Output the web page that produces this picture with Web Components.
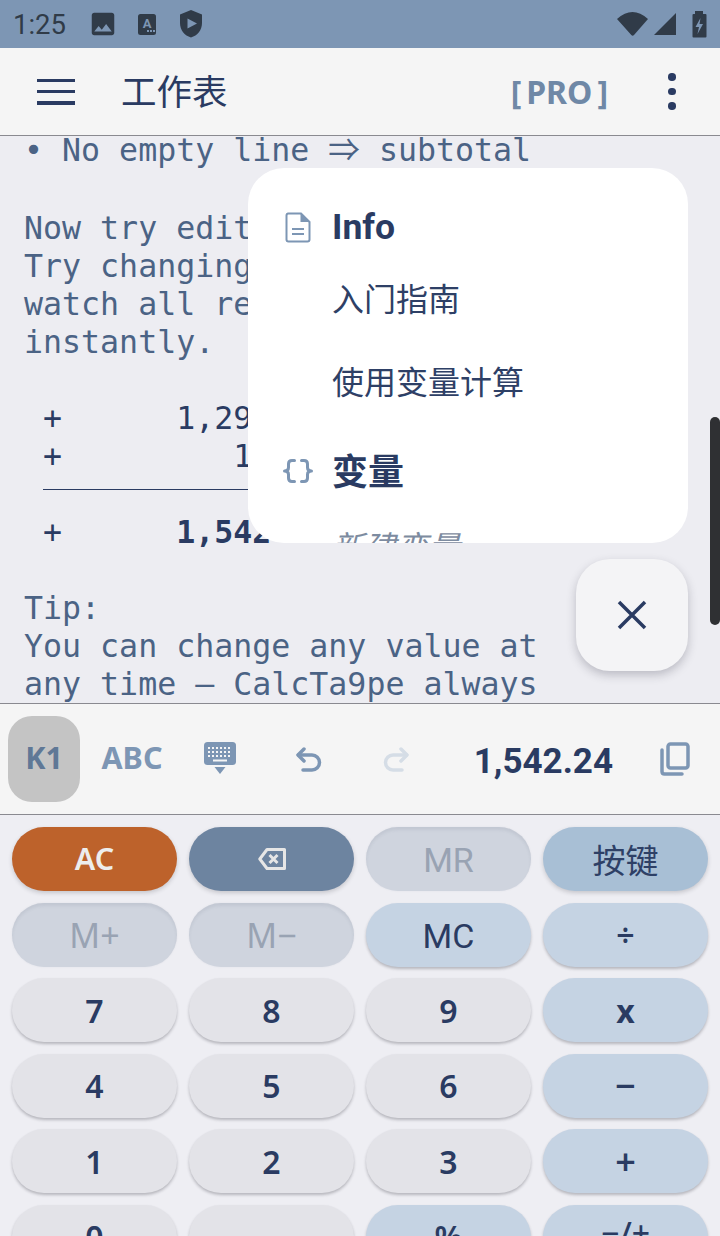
<!DOCTYPE html>
<html lang="zh">
<head>
<meta charset="utf-8">
<title>CalcTa9pe</title>
<style>
  html, body { margin: 0; height: 100%; overflow: hidden; background: #eeeef3; }
  body { display: flex; flex-direction: column; width: 720px; height: 1236px; font-family: "Noto Sans", "Noto Sans CJK SC", sans-serif; }
</style>
</head>
<body>
<status-bar></status-bar>
<app-bar></app-bar>
<doc-sheet>
  <doc-line>• No empty line <span style="font-family:'Noto Sans CJK SC',sans-serif;line-height:0">⇒</span> subtotal</doc-line>
  <doc-line style="height:40px"></doc-line>
  <doc-line>Now try edit</doc-line>
  <doc-line>Try changing</doc-line>
  <doc-line>watch all re</doc-line>
  <doc-line>instantly.</doc-line>
  <doc-line></doc-line>
  <doc-line kind="num"> +      1,29</doc-line>
  <doc-line kind="num"> +         1</doc-line>
  <doc-line kind="rule"></doc-line>
  <doc-line kind="num"> +      <b>1,542</b></doc-line>
  <doc-line></doc-line>
  <doc-line>Tip:</doc-line>
  <doc-line>You can change any value at</doc-line>
  <doc-line>any time — CalcTa9pe always</doc-line>
  <doc-menu slot="over"></doc-menu>
  <close-fab slot="over"></close-fab>
  <scroll-thumb slot="over"></scroll-thumb>
</doc-sheet>
<tool-bar></tool-bar>
<key-pad></key-pad>

<script>
const NAVY = '#2a3b62';
const STEEL = '#7d96b4';

class StatusBar extends HTMLElement {
  connectedCallback() {
    this.attachShadow({ mode: 'open' });
    this.shadowRoot.innerHTML = `
      <style>
        :host { display: flex; align-items: center; flex: none; height: 48px; background: ${STEEL}; color: #303b48; }
        .time { font: 400 27.5px Roboto, sans-serif; margin-left: 13px; width: 75px; }
        svg { display: block; fill: #303b48; flex: none; }
        .fill { flex: 1; }
      </style>
      <span class="time">1:25</span>
      <svg width="30" height="30" viewBox="0 0 24 24"><path d="M21 19V5c0-1.1-.9-2-2-2H5c-1.100 0-2 .9-2 2v14c0 1.100.9 2 2 2h14c1.100 0 2-.9 2-2zM8.500 13.500l2.500 3.010L14.500 12l4.500 6H5l3.500-4.500z"/></svg>
      <svg width="20" height="22" viewBox="0 0 20 22" style="margin-left:19px">
        <rect x="1" y="1" width="18" height="21" rx="2.500"/>
        <text x="10" y="14.500" text-anchor="middle" font-family="Roboto, sans-serif" font-weight="700" font-size="13" fill="${STEEL}">A</text>
        <rect x="10" y="17" width="2" height="2" fill="${STEEL}"/><rect x="13" y="17" width="2" height="2" fill="${STEEL}"/><rect x="16" y="17" width="2" height="2" fill="${STEEL}"/>
      </svg>
      <svg width="24" height="30" viewBox="0 0 24 30" style="margin-left:22px">
        <path d="M12 1 1 5.500V14c0 7 4.500 12.500 11 14.500C18.500 26.500 23 21 23 14V5.500zM8.500 9.500 18 14.500l-9.500 5z" fill-rule="evenodd"/>
      </svg>
      <span class="fill"></span>
      <svg width="33" height="26" viewBox="0 0 33 26" style="margin-right:4px"><path d="M1 8Q16.500-6 32 8L18 24Q16.700 25.500 15.300 24Z"/></svg>
      <svg width="24" height="24" viewBox="0 0 24 24" style="margin-right:14px"><path d="M1 23 23 1V23Z"/></svg>
      <svg width="16" height="28" viewBox="0 0 16 28" style="margin-right:13px">
        <path d="M4 1h8v3h2.500q1 0 1 1v21.500q0 1-1 1h-12q-1 0-1-1V5q0-1 1-1H4z"/>
        <path d="M9.500 8 4.500 17H8l-1.500 7 5.500-10H8.500z" fill="${STEEL}"/>
      </svg>`;
  }
}
customElements.define('status-bar', StatusBar);

class AppBar extends HTMLElement {
  connectedCallback() {
    this.attachShadow({ mode: 'open' });
    this.shadowRoot.innerHTML = `
      <style>
        :host { display: flex; align-items: center; flex: none; height: 87px; background: #f5f5f5; border-bottom: 1px solid #8a8a90; color: ${NAVY}; }
        .menu { margin-left: 37px; width: 38px; height: 26px; display: flex; flex-direction: column; justify-content: space-between; }
        .menu i { display: block; height: 3.600px; background: ${NAVY}; }
        .title { margin-left: 46px; padding-bottom: 4px; font: 400 35.500px "Noto Sans CJK SC", sans-serif; flex: 1; line-height: 1; }
        .pro { font: 700 32px "Noto Sans", sans-serif; color: #6f88a6; display: flex; gap: 5px; margin-right: 60px; }
        .more { width: 8px; margin-right: 44px; display: flex; flex-direction: column; gap: 7px; }
        .more i { display: block; width: 7.500px; height: 7.500px; border-radius: 50%; background: ${NAVY}; }
      </style>
      <div class="menu"><i></i><i></i><i></i></div>
      <div class="title">工作表</div>
      <div class="pro"><span>[</span><span>PRO</span><span>]</span></div>
      <div class="more"><i></i><i></i><i></i></div>`;
  }
}
customElements.define('app-bar', AppBar);

class DocSheet extends HTMLElement {
  connectedCallback() {
    this.attachShadow({ mode: 'open' });
    this.shadowRoot.innerHTML = `
      <style>
        :host { display: block; position: relative; flex: none; height: 567px; overflow: hidden; background: #edEDf2; }
        .lines { margin-top: -5px; padding-left: 24px; }
      </style>
      <div class="lines"><slot></slot></div>
      <slot name="over"></slot>`;
  }
}
customElements.define('doc-sheet', DocSheet);

class DocLine extends HTMLElement {
  connectedCallback() {
    this.attachShadow({ mode: 'open' });
    this.shadowRoot.innerHTML = `
      <style>
        :host { display: block; height: 38px; font: 400 31.600px/38px "DejaVu Sans Mono", monospace; color: #4b6385; }
        :host([kind="num"]) { color: ${NAVY}; }
        :host([kind="rule"]) { box-sizing: border-box; padding-top: 14px; }
        .text { white-space: pre; height: 38px; }
        .rule { height: 1px; background: ${NAVY}; margin-left: 19px; width: 300px; }
      </style>
      ${this.getAttribute('kind') === 'rule' ? '<div class="rule"></div>' : '<div class="text"><slot></slot></div>'}`;
  }
}
customElements.define('doc-line', DocLine);

class DocMenu extends HTMLElement {
  connectedCallback() {
    this.attachShadow({ mode: 'open' });
    this.shadowRoot.innerHTML = `
      <style>
        :host { display: block; position: absolute; left: 248px; top: 32px; width: 440px; height: 375px; background: #fff; border-radius: 36px; overflow: hidden; color: #2e4066; font-family: "Noto Sans CJK SC", sans-serif; }
        .list { padding-top: 33px; }
        .head { display: flex; align-items: center; height: 52px; font-weight: 700; font-size: 36px; color: ${NAVY}; }
        .head span.en { font-family: Roboto, sans-serif; font-size: 35.500px; }
        .ico { width: 85px; display: flex; justify-content: center; padding-left: 15px; box-sizing: border-box; margin-right: -1px; }
        .item { padding-left: 84px; font-size: 32px; height: 82px; line-height: 82px; }
        .item.first { margin-top: 3px; margin-bottom: 1px; }
        .item.new { font-style: italic; color: #7d8ba0; height: 60px; line-height: 60px; margin-top: 20px; }
        .vars { margin-top: 22px; }
        .vars .ico { padding-top: 4px; }
      </style>
      <div class="list">
        <div class="head">
          <div class="ico"><svg width="26" height="31" viewBox="0 0 26 31" fill="none">
            <path d="M2.500 1.500H16L24.500 10V27.500q0 2-2 2H3.500q-2 0-2-2V3.500q0-2 2-2z" stroke="${STEEL}" stroke-width="2"/>
            <path d="M15.500 1.500V10H24.500z" fill="${STEEL}"/>
            <path d="M7 17h12M7 22h12" stroke="${STEEL}" stroke-width="2"/>
          </svg></div>
          <span class="en">Info</span>
        </div>
        <div class="item first">入门指南</div>
        <div class="item">使用变量计算</div>
        <div class="head vars">
          <div class="ico"><svg width="30" height="24" viewBox="0 0 30 24" fill="none" stroke="${STEEL}" stroke-width="3" stroke-linecap="round" stroke-linejoin="round">
            <path d="M11.500 1.500H9Q5.500 1.500 5.500 5V8.500Q5.500 12 1.500 12 5.500 12 5.500 15.500V19Q5.500 22.500 9 22.500H11.500"/>
            <path d="M18.500 1.500H21Q24.500 1.500 24.500 5V8.500Q24.500 12 28.500 12 24.500 12 24.500 15.500V19Q24.500 22.500 21 22.500H18.500"/>
          </svg></div>
          <span>变量</span>
        </div>
        <div class="item new">新建变量</div>
      </div>`;
  }
}
customElements.define('doc-menu', DocMenu);

class CloseFab extends HTMLElement {
  connectedCallback() {
    this.attachShadow({ mode: 'open' });
    this.shadowRoot.innerHTML = `
      <style>
        :host { display: flex; align-items: center; justify-content: center; position: absolute; left: 576px; top: 423px; width: 112px; height: 112px; border-radius: 34px; background: #f4f4f6; box-shadow: 0 4px 10px rgba(40, 40, 60, .25); }
      </style>
      <svg width="30" height="30" viewBox="0 0 30 30" fill="none" stroke="${NAVY}" stroke-width="3.500"><path d="M2 2 28 28M28 2 2 28"/></svg>`;
  }
}
customElements.define('close-fab', CloseFab);

class ScrollThumb extends HTMLElement {
  connectedCallback() {
    this.attachShadow({ mode: 'open' });
    this.shadowRoot.innerHTML = `
      <style>
        :host { display: block; position: absolute; left: 710px; top: 281px; width: 10px; height: 208px; border-radius: 5px; background: #2f3033; }
      </style>`;
  }
}
customElements.define('scroll-thumb', ScrollThumb);

class ToolBar extends HTMLElement {
  connectedCallback() {
    this.attachShadow({ mode: 'open' });
    this.shadowRoot.innerHTML = `
      <style>
        :host { display: flex; align-items: center; flex: none; height: 110px; background: #f5f5f5; border-top: 1px solid #8a8a90; border-bottom: 1px solid #8a8a90; font-family: "Noto Sans", sans-serif; font-weight: 600; color: ${STEEL}; }
        .cell { width: 88px; flex: none; display: flex; align-items: center; justify-content: center; font-size: 31px; line-height: 1; }
        .cell.txt { padding-bottom: 3px; box-sizing: border-box; font-weight: 700; font-size: 30.500px; }
        .k1 { width: 72px; height: 86px; margin: 0 8px; border-radius: 24px; background: #c4c4c4; color: #5f7896; }
        .value { flex: 1; text-align: right; font: 700 35px Roboto, sans-serif; color: ${NAVY}; padding-right: 17px; padding-top: 5px; }
        svg { display: block; }
      </style>
      <div class="cell txt k1">K1</div>
      <div class="cell txt">ABC</div>
      <div class="cell"><svg width="32" height="32" viewBox="0 0 32 32" style="margin-bottom:2px">
        <rect width="32" height="23" rx="3.500" fill="${STEEL}"/>
        <path d="M4 5h2v2H4zM8 5h2v2H8zM12 5h2v2h-2zM16 5h2v2h-2zM20 5h2v2h-2zM24 5h2v2h-2zM4 9h2v2H4zM8 9h2v2H8zM12 9h2v2h-2zM16 9h2v2h-2zM20 9h2v2h-2zM24 9h2v2h-2zM4 13h2v2H4zM8 13h2v2H8zM12 13h2v2h-2zM16 13h2v2h-2zM20 13h2v2h-2zM24 13h2v2h-2zM9 17.500h14v2H9z" fill="#f5f5f5"/>
        <path d="M10.500 25h11L16 32z" fill="${STEEL}"/>
      </svg></div>
      <div class="cell"><svg width="26" height="25" viewBox="0 0 26 25" fill="none" stroke="${STEEL}" stroke-width="3.500" stroke-linecap="round" stroke-linejoin="round" style="margin-left:2px">
        <path d="M8 2 2 8l6 6"/><path d="M2.500 8H16a7.500 7.500 0 0 1 0 15H7"/>
      </svg></div>
      <div class="cell"><svg width="26" height="25" viewBox="0 0 26 25" fill="none" stroke="#d5dde6" stroke-width="3.500" stroke-linecap="round" stroke-linejoin="round">
        <path d="M18 2l6 6-6 6"/><path d="M23.500 8H10a7.500 7.500 0 0 0 0 15h9"/>
      </svg></div>
      <div class="value">1,542.24</div>
      <div class="cell" style="width:90px"><svg width="30" height="34" viewBox="0 0 30 34" fill="none" stroke="${STEEL}" stroke-width="3.500" stroke-linejoin="round" stroke-linecap="round">
        <rect x="8" y="2" width="20" height="24" rx="2.500"/><path d="M2 8V29.500q0 2.500 2.500 2.500H22"/>
      </svg></div>`;
  }
}
customElements.define('tool-bar', ToolBar);

class CalcKey extends HTMLElement {
  connectedCallback() {
    this.attachShadow({ mode: 'open' });
    this.shadowRoot.innerHTML = `
      <style>
        :host { display: flex; align-items: center; justify-content: center; box-sizing: border-box; height: 64px; border-radius: 32px; background: #e3e3e8; color: ${NAVY}; font: 600 32px "Noto Sans", "Noto Sans CJK SC", sans-serif; box-shadow: 0 2px 3px rgba(40, 40, 50, .28); }
        :host([tone="op"]) { background: #c5d3e3; }
        :host([tone="ac"]) { background: #bd622b; color: #ededed; font-size: 30.500px; padding-bottom: 3px; box-shadow: 0 2px 4px rgba(40, 40, 50, .2); }
        :host([tone="del"]) { background: #6d84a0; box-shadow: 0 2px 4px rgba(40, 40, 50, .2); }
        :host([tone="mode"]) { background: #a8bfd5; font-size: 33px; font-weight: 400; color: #2e4066; box-shadow: 0 2px 4px rgba(40, 40, 50, .2); }
        :host([tone="off"]) { background: #cfd4de; color: #99a3b3; font-weight: 400; box-shadow: inset 0 3px 3px rgba(90, 100, 120, .1), 0 0 2px rgba(90, 100, 120, .1); }
        :host([rb]) { font-family: Roboto, sans-serif; font-size: 34px; font-weight: 400; padding-top: 2px; }
      </style>
      <slot></slot>`;
  }
}
customElements.define('calc-key', CalcKey);

class KeyPad extends HTMLElement {
  connectedCallback() {
    this.attachShadow({ mode: 'open' });
    this.shadowRoot.innerHTML = `
      <style>
        :host { display: grid; grid-template-columns: repeat(4, 165px); grid-auto-rows: 64px; column-gap: 12px; row-gap: 11.500px; padding: 12px 12px 0; flex: 1; overflow: hidden; background: #eeeef3; }
      </style>
      <calc-key tone="ac">AC</calc-key>
      <calc-key tone="del"><svg width="28" height="22" viewBox="0 0 28 22" fill="none" stroke="#e6e6e6" stroke-width="3" stroke-linejoin="round"><path d="M9 1.500H26.500V20.500H9L1.800 11z"/><path d="M11.500 7 19.500 15M19.500 7 11.500 15"/></svg></calc-key>
      <calc-key tone="off" rb>MR</calc-key>
      <calc-key tone="mode">按键</calc-key>
      <calc-key tone="off" style="font-size:34px">M+</calc-key>
      <calc-key tone="off" style="font-size:34px">M−</calc-key>
      <calc-key tone="op" rb>MC</calc-key>
      <calc-key tone="op">÷</calc-key>
      <calc-key>7</calc-key><calc-key>8</calc-key><calc-key>9</calc-key><calc-key tone="op" style="font-weight:700">x</calc-key>
      <calc-key>4</calc-key><calc-key>5</calc-key><calc-key>6</calc-key><calc-key tone="op" style="font-size:36px">−</calc-key>
      <calc-key>1</calc-key><calc-key>2</calc-key><calc-key>3</calc-key><calc-key tone="op" style="font-size:36px">+</calc-key>
      <calc-key>0</calc-key><calc-key>.</calc-key><calc-key tone="op">%</calc-key><calc-key tone="op" style="font-weight:500;padding-bottom:8px">−/+</calc-key>`;
  }
}
customElements.define('key-pad', KeyPad);
</script>
</body>
</html>
